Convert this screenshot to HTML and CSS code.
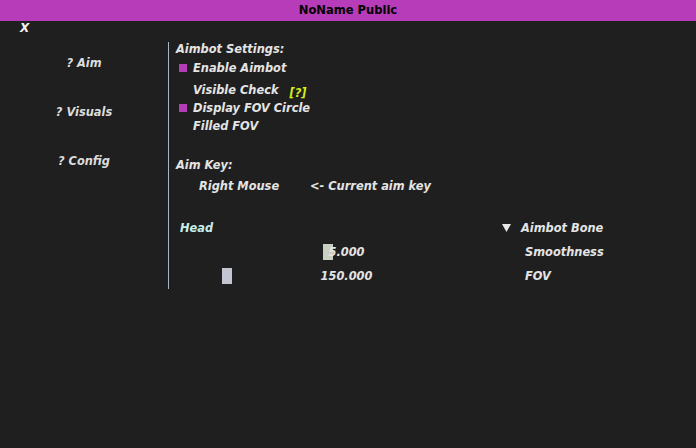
FILE: index.html
```html
<!DOCTYPE html>
<html>
<head>
<meta charset="utf-8">
<link rel="stylesheet" href="styles.css">
</head>
<body>
<header class="titlebar">NoName Public</header>
<div class="closebar"><span class="close">X</span></div>
<div class="main">
  <nav class="sidebar">
    <div class="nav-item">? Aim</div>
    <div class="nav-item">? Visuals</div>
    <div class="nav-item">? Config</div>
  </nav>
  <section class="content">
    <div class="row heading">Aimbot Settings:</div>
    <div class="row check r-enable"><span class="box on"></span>Enable Aimbot</div>
    <div class="row check r-visible"><span class="box"></span>Visible Check <span class="help">[?]</span></div>
    <div class="row check r-fov"><span class="box on"></span>Display FOV Circle</div>
    <div class="row check r-filled"><span class="box"></span>Filled FOV</div>
    <div class="row heading r-aimkey">Aim Key:</div>
    <div class="row keyrow"><span class="key">Right Mouse</span><span>&lt;- Current aim key</span></div>
    <div class="row field r-combo">
      <div class="frame combo"><span class="combo-val">Head</span><svg class="arrow" width="9" height="8" viewBox="0 0 9 8"><path d="M0 0 H9 L4.5 8 Z" fill="#e8e8e8"/></svg></div>
      <span class="label combo-label">Aimbot Bone</span>
    </div>
    <div class="row field r-slider">
      <div class="frame slider"><span class="grab g-smooth" style="left:147px"></span><span class="val">5.000</span></div>
      <span class="label">Smoothness</span>
    </div>
    <div class="row field r-slider">
      <div class="frame slider"><span class="grab g-fov" style="left:46px"></span><span class="val">150.000</span></div>
      <span class="label">FOV</span>
    </div>
  </section>
</div>
</body>
</html>
```
FILE: styles.css
```css
* { box-sizing: border-box; }
html, body { margin: 0; padding: 0; }
body {
  background: #1f1f1f;
  width: 696px;
  height: 448px;
  overflow: hidden;
  font-family: "DejaVu Sans", Verdana, sans-serif;
  font-weight: bold;
  font-style: italic;
  font-size: 11.4px;
  color: #e4e4e4;
}
.titlebar {
  height: 21px;
  background: #b63cb9;
  color: #000;
  font-family: "DejaVu Sans Condensed", "DejaVu Sans", sans-serif;
  font-stretch: condensed;
  font-style: normal;
  font-weight: bold;
  font-size: 12.8px;
  line-height: 20px;
  text-align: center;
}
.closebar {
  height: 21px;
  padding-left: 20px;
  line-height: 14px;
  padding-top: 0;
}
.close { font-size: 12px; color: #f2f2f2; }
.main {
  display: grid;
  grid-template-columns: 168px 1fr;
}
.sidebar {
  display: flex;
  flex-direction: column;
  align-items: center;
  padding-top: 12px;
  gap: 31px;
  color: #dcdcdc;
}
.nav-item { line-height: 18px; }
.content {
  border-left: 1px solid #a8b4c8;
  height: 247px;
  padding-left: 7px;
  display: flex;
  flex-direction: column;
}
.row { line-height: 14px; height: 14px; white-space: nowrap; }
.check { display: flex; align-items: center; padding-left: 3px; }
.box { width: 8px; height: 8px; margin-right: 6px; }
.box.on { background: #b33db9; }
.r-enable { margin-top: 5px; }
.r-visible { margin-top: 8px; }
.r-fov { margin-top: 4px; }
.r-filled { margin-top: 4px; }
.help { color: #d6ee1c; margin-left: 11px; position: relative; top: 3px; }
.r-aimkey { margin-top: 25px; }
.keyrow { margin-top: 7px; padding-left: 23px; display: flex; }
.key { width: 111px; }
.field { display: flex; align-items: center; }
.r-combo { margin-top: 28px; }
.r-slider { margin-top: 10px; }
.frame { position: relative; width: 341px; height: 16px; line-height: 16px; }
.combo { display: flex; align-items: center; padding-left: 4px; }
.combo-val { color: #c6f0ec; flex: 1; }
.arrow { margin-right: 6px; }
.slider { text-align: center; }
.val { position: relative; }
.grab {
  position: absolute;
  top: 0;
  width: 10px;
  height: 16px;
}
.g-smooth { background: #c9d0c0; }
.g-fov { background: #c3c6d2; }
.label { margin-left: 8px; }
.combo-label { margin-left: 4px; }
```
